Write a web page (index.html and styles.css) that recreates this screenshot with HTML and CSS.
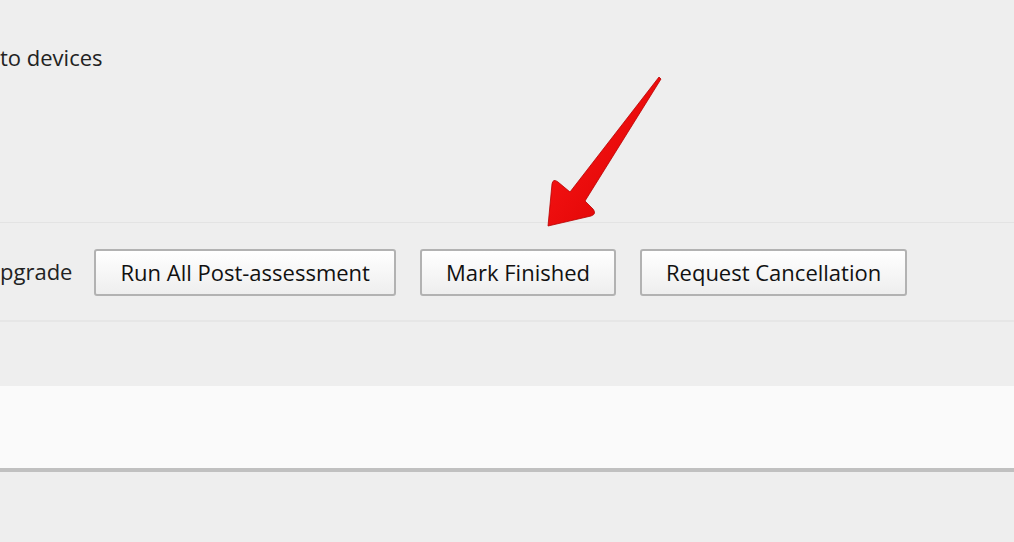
FILE: index.html
```html
<!DOCTYPE html>
<html>
<head>
<meta charset="utf-8">
<link rel="stylesheet" href="styles.css">
</head>
<body>
<div class="page">
  <section class="intro">
    <p class="intro-text">to devices</p>
  </section>
  <section class="actions">
    <span class="label">Upgrade</span>
    <button class="btn">Run All Post-assessment</button>
    <button class="btn">Mark Finished</button>
    <button class="btn">Request Cancellation</button>
  </section>
  <section class="spacer"></section>
  <section class="panel"></section>
  <svg class="arrow" width="140" height="170" viewBox="0 0 140 170">
    <defs>
      <linearGradient id="ag" x1="0" y1="0" x2="1" y2="1">
        <stop offset="0" stop-color="#ff1a1a"/>
        <stop offset="1" stop-color="#d90000"/>
      </linearGradient>
    </defs>
    <path d="M117 2 L119 4 L43 126 L51 134 Q55 139 49 141 L6 151 L10 109 Q11 103 16 107 L28 117 Z" fill="url(#ag)" stroke="#b80000" stroke-width="0.8" stroke-linejoin="round"/>
  </svg>
</div>
</body>
</html>
```

FILE: styles.css
```css
html, body {
  margin: 0;
  padding: 0;
  background: #eeeeee;
}
body {
  font-family: "Open Sans", "Liberation Sans", sans-serif;
  color: #222;
  overflow: hidden;
  width: 1014px;
  height: 542px;
}
.page {
  position: relative;
  width: 1014px;
  height: 542px;
}
.intro {
  height: 223px;
  border-bottom: 1px solid #e3e3e3;
  box-sizing: border-box;
  padding-top: 42px;
}
.intro-text {
  margin: 0;
  font-size: 22px;
  line-height: 30px;
  padding-left: 0;
}
.actions {
  height: 99px;
  box-sizing: border-box;
  border-bottom: 2px solid #e6e6e6;
  display: flex;
  align-items: center;
  padding-bottom: 2px;
}
.label {
  font-size: 22px;
  margin-left: -16px;
  margin-right: 22px;
}
.btn {
  font-family: "Open Sans", "Liberation Sans", sans-serif;
  font-size: 22px;
  color: #111;
  height: 47px;
  box-sizing: border-box;
  padding: 0 24px;
  border: 2px solid #b2b2b2;
  border-radius: 3px;
  background: linear-gradient(#ffffff, #eeeeee);
  margin-right: 24px;
  margin-top: 3px;
}
.spacer {
  height: 64px;
}
.panel {
  height: 86px;
  box-sizing: border-box;
  background: #fafafa;
  border-bottom: 4px solid #c0c0c0;
}
.arrow {
  position: absolute;
  left: 542px;
  top: 75px;
}
```
